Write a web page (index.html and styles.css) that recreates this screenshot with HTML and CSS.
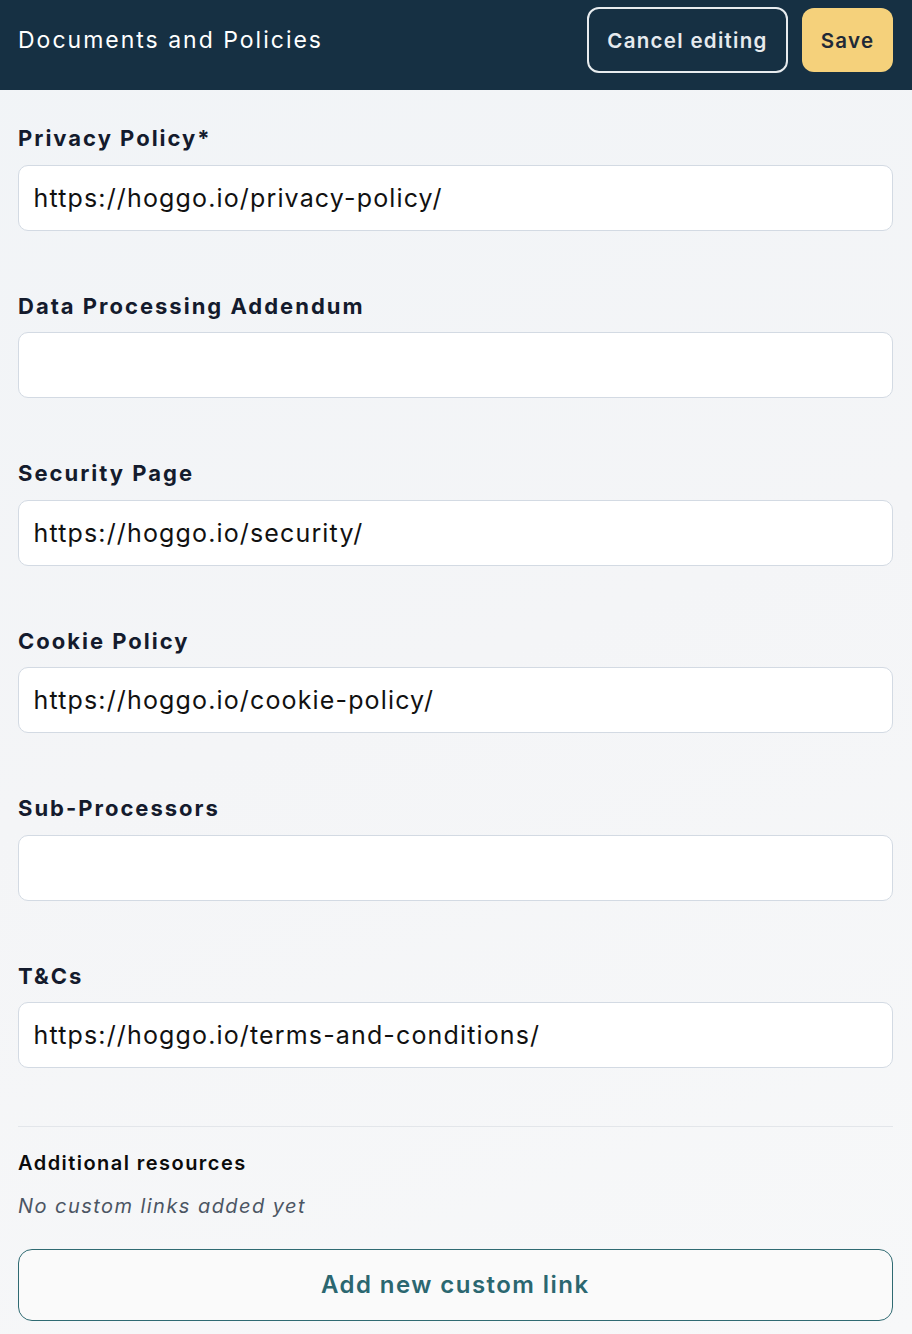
FILE: index.html
```html
<!DOCTYPE html>
<html>
<head>
<meta charset="utf-8">
<link rel="stylesheet" href="styles.css">
</head>
<body>
<div class="page">
  <header class="topbar">
    <h1 class="title">Documents and Policies</h1>
    <div class="actions">
      <button class="btn btn-outline">Cancel editing</button>
      <button class="btn btn-save">Save</button>
    </div>
  </header>
  <main class="content">
    <div class="fields">
      <div class="field">
        <label class="label">Privacy Policy*</label>
        <div class="input">https://hoggo.io/privacy-policy/</div>
      </div>
      <div class="field">
        <label class="label">Data Processing Addendum</label>
        <div class="input"></div>
      </div>
      <div class="field">
        <label class="label">Security Page</label>
        <div class="input">https://hoggo.io/security/</div>
      </div>
      <div class="field">
        <label class="label">Cookie Policy</label>
        <div class="input">https://hoggo.io/cookie-policy/</div>
      </div>
      <div class="field">
        <label class="label">Sub-Processors</label>
        <div class="input"></div>
      </div>
      <div class="field">
        <label class="label">T&amp;Cs</label>
        <div class="input">https://hoggo.io/terms-and-conditions/</div>
      </div>
    </div>
    <hr class="sep">
    <section class="extra">
      <h2 class="extra-title">Additional resources</h2>
      <p class="empty">No custom links added yet</p>
      <button class="btn-add">Add new custom link</button>
    </section>
  </main>
</div>
</body>
</html>
```
FILE: styles.css
```css
* { box-sizing: border-box; }
html, body { margin: 0; padding: 0; }
body {
  font-family: "Inter", "Noto Sans", sans-serif;
  background: linear-gradient(160deg, #f1f4f7 0%, #f4f5f7 50%, #f7f8f9 100%);
  min-height: 1334px;
  color: #111827;
}
.topbar {
  height: 90px;
  background: #163043;
  display: flex;
  align-items: center;
  justify-content: space-between;
  padding: 0 19px 10px 18px;
}
.title {
  margin: 0;
  font-size: 23px;
  font-weight: 400;
  color: #ffffff;
  letter-spacing: 2px;
}
.actions { display: flex; gap: 14px; align-items: center; }
.btn {
  font-family: inherit;
  font-size: 20.5px;
  font-weight: 600;
  border-radius: 12px;
  cursor: pointer;
  letter-spacing: 1.3px;
  padding: 0;
}
.btn-outline {
  width: 201px;
  height: 66px;
  background: transparent;
  border: 2px solid #e8ecef;
  color: #e6eaee;
}
.btn-save {
  width: 91px;
  height: 64px;
  background: #f5d17b;
  border: none;
  color: #1f2937;
}
.content { padding: 31px 19px 0 17.5px; }
.fields { display: flex; flex-direction: column; gap: 58.1px; }
.field { display: flex; flex-direction: column; gap: 9.5px; }
.label {
  display: block;
  height: 34px;
  line-height: 34px;
  font-size: 22px;
  font-weight: 700;
  color: #141b2d;
  padding-left: 0.5px;
  letter-spacing: 2px;
}
.input {
  height: 66px;
  background: #ffffff;
  border: 1px solid #d3dae3;
  border-radius: 10px;
  padding: 0 15px;
  display: flex;
  align-items: center;
  font-size: 25px;
  color: #111111;
  letter-spacing: 1.15px;
}
.sep {
  border: none;
  border-top: 1px solid #e3e6ea;
  margin: 57.5px 0 0 0;
  height: 0;
}
.extra { display: flex; flex-direction: column; }
.extra-title {
  margin: 21px 0 0 0;
  height: 30px;
  line-height: 30px;
  font-size: 20px;
  font-weight: 600;
  color: #0b0b0b;
  padding-left: 0.5px;
  letter-spacing: 1.45px;
}
.empty {
  margin: 13px 0 0 0;
  height: 30px;
  line-height: 30px;
  font-size: 20px;
  font-style: italic;
  color: #4b5563;
  padding-left: 0.5px;
  letter-spacing: 1.45px;
}
.btn-add {
  margin-top: 28px;
  height: 72px;
  width: 100%;
  background: #fafafa;
  border: 1px solid #2f6a72;
  border-radius: 14px;
  font-family: inherit;
  font-size: 24px;
  font-weight: 600;
  color: #2b6770;
  cursor: pointer;
  letter-spacing: 1.45px;
}
```
